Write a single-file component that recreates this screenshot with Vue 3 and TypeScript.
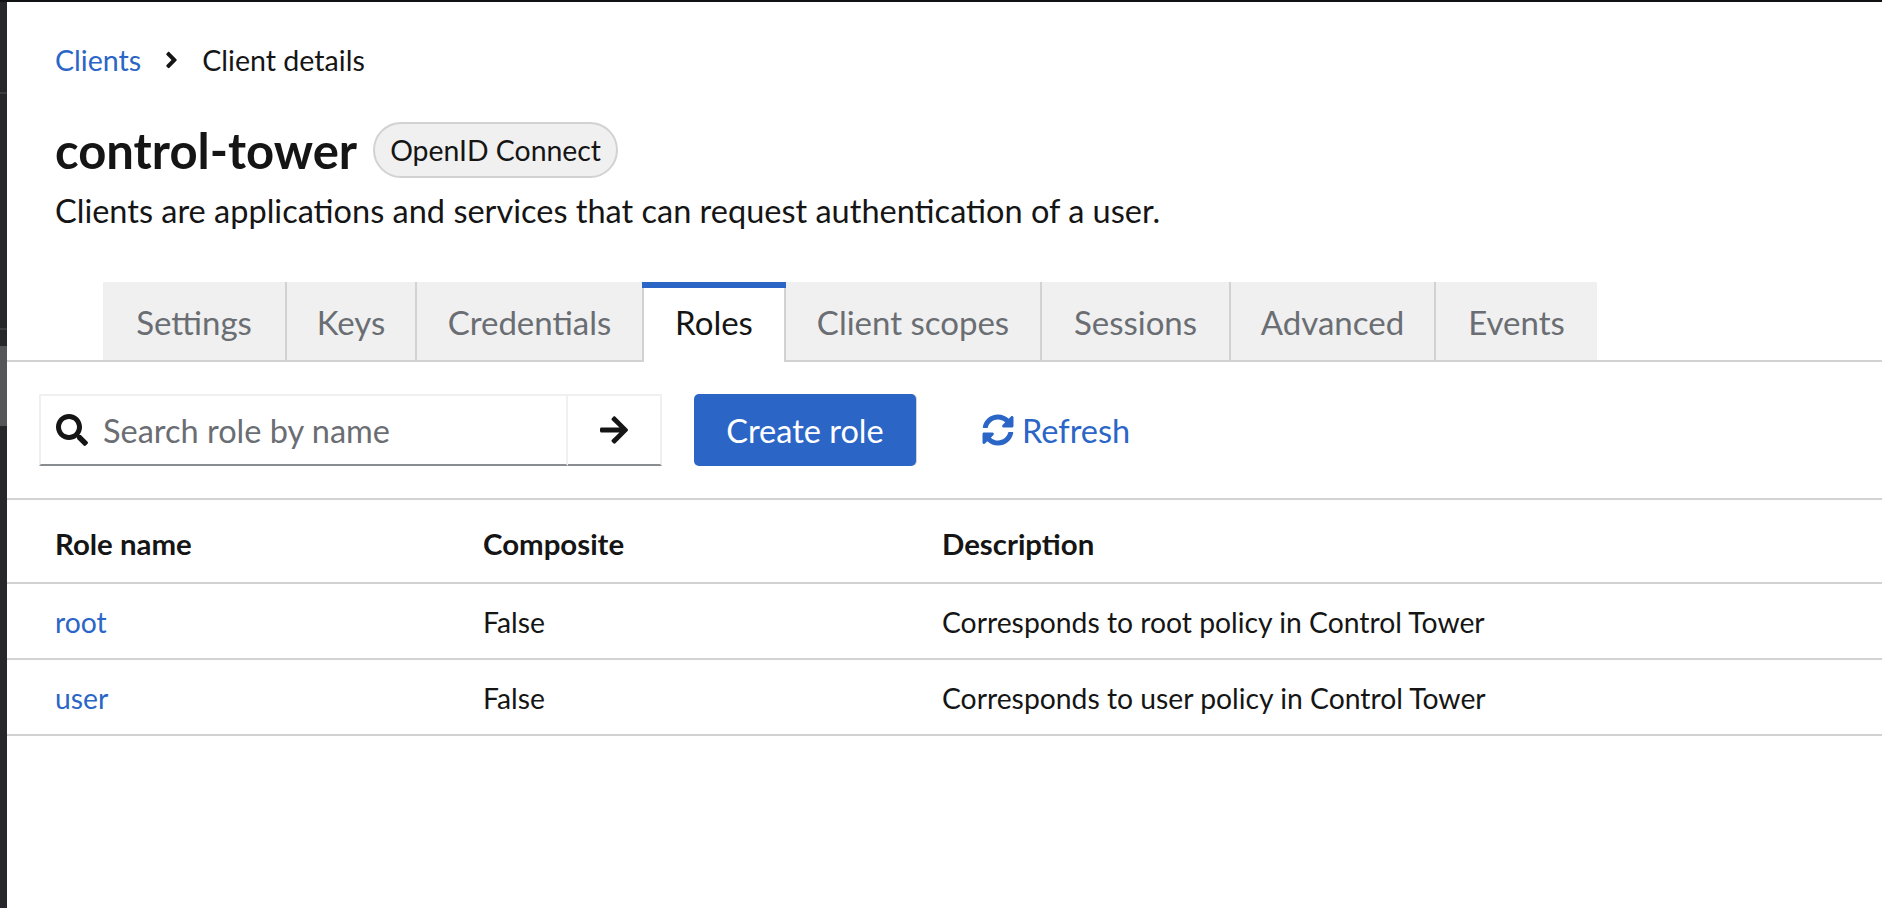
<script setup lang="ts">
const tabs = ['Settings', 'Keys', 'Credentials', 'Roles', 'Client scopes', 'Sessions', 'Advanced', 'Events']
const rows = [
  { name: 'root', composite: 'False', description: 'Corresponds to root policy in Control Tower' },
  { name: 'user', composite: 'False', description: 'Corresponds to user policy in Control Tower' },
]
</script>

<template>
  <div class="screen">
    <div class="topline"></div>
    <div class="body">
      <aside class="strip">
        <div class="seg s1"></div>
        <div class="seg s2"></div>
        <div class="seg s3"></div>
        <div class="seg s4"></div>
      </aside>
      <main class="page">
        <nav class="crumbs">
          <a class="link">Clients</a>
          <svg class="chev" viewBox="0 0 256 512"><path d="M224.3 273l-136 136c-9.4 9.4-24.6 9.4-33.9 0l-22.6-22.6c-9.4-9.4-9.4-24.6 0-33.9l96.4-96.4-96.4-96.4c-9.4-9.4-9.4-24.6 0-33.9L54.3 103c9.4-9.4 24.6-9.4 33.9 0l136 136c9.5 9.4 9.5 24.6.1 34z"/></svg>
          <span>Client details</span>
        </nav>
        <div class="title-row">
          <h1>control-tower</h1>
          <span class="chip">OpenID Connect</span>
        </div>
        <p class="desc">Clients are applications and services that can request authentication of a user.</p>

        <div class="tabs">
          <button v-for="t in tabs" :key="t" class="tab" :class="{ active: t === 'Roles' }">{{ t }}</button>
        </div>

        <div class="toolbar">
          <div class="search">
            <div class="field">
              <svg class="ico-search" viewBox="0 0 512 512"><path d="M505 442.7L405.3 343c-4.5-4.5-10.6-7-17-7H372c27.6-35.3 44-79.7 44-128C416 93.1 322.9 0 208 0S0 93.1 0 208s93.1 208 208 208c48.3 0 92.7-16.4 128-44v16.3c0 6.4 2.5 12.5 7 17l99.7 99.7c9.4 9.4 24.6 9.4 33.9 0l28.3-28.3c9.4-9.4 9.4-24.6.1-34zM208 336c-70.7 0-128-57.2-128-128 0-70.7 57.2-128 128-128 70.7 0 128 57.2 128 128 0 70.7-57.2 128-128 128z"/></svg>
              <span class="placeholder">Search role by name</span>
            </div>
            <div class="go">
              <svg class="ico-arrow" viewBox="0 0 448 512"><path d="M190.5 66.9l22.2-22.2c9.4-9.4 24.6-9.4 33.9 0L441 239c9.4 9.4 9.4 24.6 0 33.9L246.6 467.3c-9.4 9.4-24.6 9.4-33.9 0l-22.2-22.2c-9.5-9.5-9.3-25 .4-34.3L311.4 296H24c-13.3 0-24-10.7-24-24v-32c0-13.3 10.7-24 24-24h287.4L190.9 101.2c-9.8-9.3-10-24.8-.4-34.3z"/></svg>
            </div>
          </div>
          <button class="primary">Create role</button>
          <a class="refresh">
            <svg class="ico-sync" viewBox="0 0 512 512"><path d="M370.72 133.28C339.458 104.008 298.888 87.962 255.848 88c-77.458.068-144.328 53.178-162.791 126.85-1.344 5.363-6.122 9.15-11.651 9.15H24.103c-7.498 0-13.194-6.807-11.807-14.176C33.933 94.924 134.813 8 256 8c66.448 0 126.791 26.136 171.315 68.685L463.03 40.97C478.149 25.851 504 36.559 504 57.941V192c0 13.255-10.745 24-24 24H345.941c-21.382 0-32.09-25.851-16.971-40.971l41.75-41.749zM32 296h134.059c21.382 0 32.09 25.851 16.971 40.971l-41.75 41.75c31.262 29.273 71.835 45.319 114.876 45.28 77.418-.07 144.315-53.144 162.787-126.849 1.344-5.363 6.122-9.15 11.651-9.15h57.304c7.498 0 13.194 6.807 11.807 14.176C478.067 417.076 377.187 504 256 504c-66.448 0-126.791-26.136-171.315-68.685L48.97 471.03C33.851 486.149 8 475.441 8 454.059V320c0-13.255 10.745-24 24-24z"/></svg>
            <span>Refresh</span>
          </a>
        </div>

        <div class="table">
          <div class="row head">
            <div>Role name</div>
            <div>Composite</div>
            <div>Description</div>
          </div>
          <div v-for="r in rows" :key="r.name" class="row item">
            <div><a class="link">{{ r.name }}</a></div>
            <div>{{ r.composite }}</div>
            <div>{{ r.description }}</div>
          </div>
        </div>
      </main>
    </div>
  </div>
</template>

<style>
html, body { margin: 0; background: #fff; overflow: hidden; }
</style>

<style scoped>
.screen {
  width: 1882px;
  height: 908px;
  display: flex;
  flex-direction: column;
  font-family: "Lato", "Open Sans", sans-serif;
  font-size: 32.5px;
  color: #151515;
  background: #fff;
  overflow: hidden;
}
.topline { height: 2px; background: #111214; flex: none; }
.body { flex: 1; display: flex; min-height: 0; }
.strip { width: 7px; flex: none; display: flex; flex-direction: column; background: #26272b; }
.seg { flex: none; }
.s1 { height: 90px; border-bottom: 2px solid #3c3d41; }
.s2 { height: 234px; border-bottom: 2px solid #3c3d41; }
.s3 { height: 16px; }
.s4 { height: 80px; background: #55565a; }
.page { flex: 1; min-width: 0; display: flex; flex-direction: column; }

.crumbs { display: flex; align-items: center; height: 40px; margin-top: 38px; padding-left: 48px; font-size: 28.6px; color: #151515; }
.link { color: #2b66c7; }
.chev { width: 13px; height: 26px; margin: 0 24px; fill: #151515; }

.title-row { display: flex; align-items: center; height: 56px; margin-top: 42px; padding-left: 48px; }
h1 { margin: 0; font-size: 49px; font-weight: 700; line-height: 56px; color: #151515; }
.chip {
  margin-left: 16px;
  height: 56px;
  box-sizing: border-box;
  padding: 0 15px 1px;
  display: flex;
  align-items: center;
  font-size: 28.4px;
  background: #f0f0f0;
  border: 2px solid #d2d2d2;
  border-radius: 28px;
}
.desc { margin: 13px 0 0; padding-left: 48px; height: 40px; line-height: 40px; }

.tabs {
  margin-top: 51px;
  height: 80px;
  box-sizing: border-box;
  padding-left: 96px;
  display: grid;
  grid-template-columns: 184px 130px 225px 144px 256px 189px 205px 161px;
  justify-content: start;
  align-items: start;
  border-bottom: 2px solid #d2d2d2;
  font-size: 33px;
}
.tab {
  font: inherit;
  height: 78px;
  box-sizing: border-box;
  border: 0;
  border-right: 2px solid #d2d2d2;
  background: #f0f0f0;
  color: #6a6e73;
  padding: 2px 0 0;
}
.tab:nth-child(3), .tab:last-child { border-right: 0; }
.tab.active {
  position: relative;
  height: 80px;
  background: #fff;
  color: #151515;
  border-left: 2px solid #d2d2d2;
  padding: 0;
}
.tab.active::before {
  content: "";
  position: absolute;
  top: 0;
  left: -2px;
  right: -2px;
  height: 6px;
  background: #2b66c7;
}

.toolbar { display: flex; align-items: stretch; height: 72px; margin-top: 32px; padding-left: 32px; }
.search { display: flex; width: 623px; }
.field, .go {
  box-sizing: border-box;
  display: flex;
  align-items: center;
  border: 2px solid #f0f0f0;
  border-bottom-color: #8a8d90;
}
.field { width: 529px; padding-left: 15px; }
.go { flex: 1; justify-content: center; border-left: 0; }
.ico-search { width: 32px; height: 32px; fill: #151515; margin-right: 15px; }
.placeholder { color: #6a6e73; }
.ico-arrow { width: 28px; height: 32px; fill: #151515; }
.primary {
  margin-left: 32px;
  width: 222px;
  font: inherit;
  color: #fff;
  background: #2b66c7;
  border: 0;
  border-radius: 5px;
  box-shadow: 1px 0 0 #d2d2d2;
  padding: 0;
}
.refresh { display: flex; align-items: center; margin-left: 66px; color: #2b66c7; }
.ico-sync { width: 32px; height: 32px; fill: #2b66c7; margin-right: 8px; }

.table { margin-top: 32px; border-top: 2px solid #d2d2d2; }
.row {
  display: grid;
  grid-template-columns: 428px 459px 1fr;
  padding-left: 48px;
  align-items: center;
  box-sizing: border-box;
  border-bottom: 2px solid #d2d2d2;
}
.head { height: 84px; padding-top: 5px; font-weight: 700; font-size: 29.4px; }
.item { height: 76px; padding-top: 1px; font-size: 28.3px; }
</style>
